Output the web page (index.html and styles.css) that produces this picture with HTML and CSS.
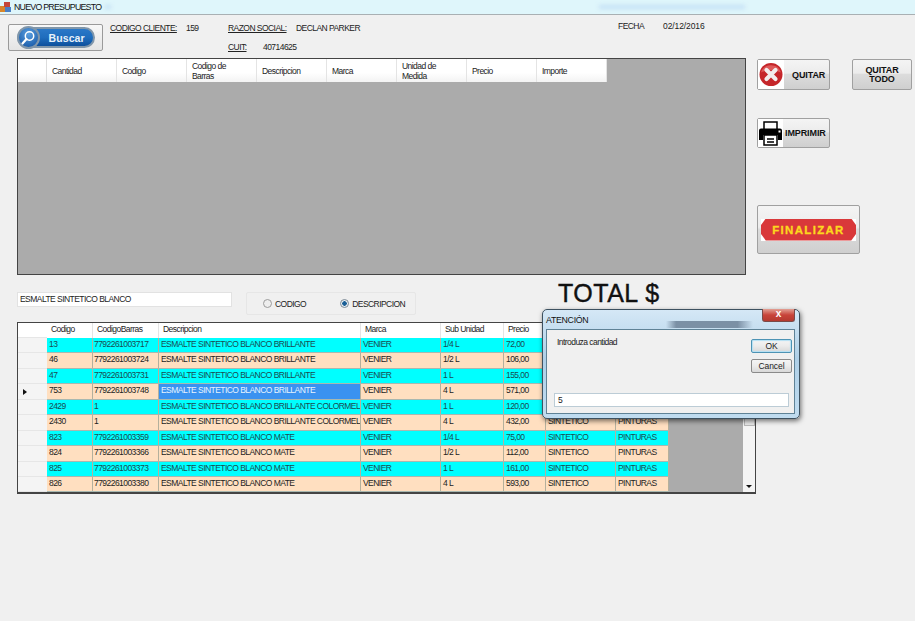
FILE: index.html
```html
<!DOCTYPE html>
<html>
  <head>
    <meta charset="utf-8">
    <link rel="stylesheet" href="styles.css">
    <title>Nuevo Presupuesto</title>
  </head>
  <body>
    <div class="titlebar">
      <svg class="app-icon" width="12" height="12" viewBox="0 0 12 12">
        <rect x="0" y="5" width="5" height="6" fill="#d9862b"/>
        <rect x="4" y="1" width="6" height="5" fill="#c4473a"/>
        <rect x="5" y="6" width="6" height="5" fill="#4a7fc4"/>
      </svg>
      <span>NUEVO PRESUPUESTO</span>
      <i class="smudge smudge-left"></i>
      <i class="smudge smudge-right"></i>
    </div>

    <div class="header">
      <button class="btn-buscar">
        <span class="buscar-pill">
          <span class="buscar-lens">
            <svg width="18" height="18" viewBox="0 0 18 18">
              <circle cx="10.5" cy="7" r="4.2" fill="none" stroke="#fff" stroke-width="1.5"/>
              <path d="M7.5 10 L3.5 14.5" stroke="#fff" stroke-width="2.2" stroke-linecap="round"/>
            </svg>
          </span>
          <span class="buscar-text">Buscar</span>
        </span>
      </button>
      <div class="client">
        <span class="label codigo-label">CODIGO CLIENTE:</span>
        <span class="codigo-value">159</span>
      </div>
      <div class="client-two">
        <div class="client-row">
          <span class="label razon-label">RAZON SOCIAL:</span>
          <span>DECLAN PARKER</span>
        </div>
        <div class="client-row cuit-row">
          <span class="label cuit-label">CUIT:</span>
          <span>40714625</span>
        </div>
      </div>
      <div class="fecha">
        <span class="fecha-label">FECHA</span>
        <span class="fecha-value">02/12/2016</span>
      </div>
    </div>

    <div class="upper">
      <div class="grid-top">
        <div class="top-head">
          <div class="top-corner"></div>
          <div class="top-col">Cantidad</div>
          <div class="top-col">Codigo</div>
          <div class="top-col">Codigo de<br>Barras</div>
          <div class="top-col">Descripcion</div>
          <div class="top-col">Marca</div>
          <div class="top-col">Unidad de<br>Medida</div>
          <div class="top-col">Precio</div>
          <div class="top-col">Importe</div>
        </div>
      </div>
      <div class="actions">
        <div class="actions-row">
          <button class="btn btn-quitar">
            <svg class="btn-icon" width="26" height="29" viewBox="0 0 26 29">
              <circle cx="13" cy="14.500" r="11.500" fill="#c5262a"/>
              <path d="M3 12.500 A10.500 10.500 0 0 1 23 12.500 Q13 7.500 3 12.500Z" fill="#de5a5a"/>
              <path d="M8.500 10 L17.500 19 M17.500 10 L8.500 19" stroke="#f2ecec" stroke-width="4.200" stroke-linecap="round"/>
            </svg>
            <span class="quitar-text">QUITAR</span>
          </button>
          <button class="btn btn-todo">QUITAR<br>TODO</button>
        </div>
        <button class="btn btn-imprimir">
          <svg class="btn-icon" width="25" height="28" viewBox="0 0 25 28">
            <rect x="6" y="3" width="13" height="8" fill="#fff" stroke="#000" stroke-width="1.500"/>
            <path d="M3 9.500 H22 Q24 9.500 24 11.500 V21 H20 V16 H5 V21 H1 V11.500 Q1 9.500 3 9.500Z" fill="#000"/>
            <rect x="20.500" y="11.500" width="2" height="2" fill="#fff"/>
            <rect x="6" y="16" width="13" height="10" fill="#fff" stroke="#000" stroke-width="1.500"/>
            <path d="M9 20 H16 M9 23 H16" stroke="#000" stroke-width="1.300"/>
          </svg>
          <span>IMPRIMIR</span>
        </button>
        <button class="btn btn-finalizar">
          <span class="finalizar-back">
            <span class="finalizar-plate">FINALIZAR</span>
          </span>
        </button>
      </div>
    </div>

    <div class="search">
      <div class="search-input">ESMALTE SINTETICO BLANCO</div>
      <div class="radios">
        <span class="radio"><i class="dot"></i>CODIGO</span>
        <span class="radio"><i class="dot dot-on"></i>DESCRIPCION</span>
      </div>
      <div class="total">TOTAL $</div>
    </div>

    <div class="grid-bottom">
      <div class="row-heads">
        <div class="rh rh-first"></div>
        <div class="rh"></div>
        <div class="rh"></div>
        <div class="rh"></div>
        <div class="rh"><b class="arrow"></b></div>
        <div class="rh"></div>
        <div class="rh"></div>
        <div class="rh"></div>
        <div class="rh"></div>
        <div class="rh"></div>
        <div class="rh"></div>
      </div>
      <div class="table">
        <div class="row row-head">
          <div class="c c1">Codigo</div><div class="c c2">CodigoBarras</div><div class="c c3">Descripcion</div><div class="c c4">Marca</div><div class="c c5">Sub Unidad</div><div class="c c6">Precio</div><div class="c c7">Tipo</div><div class="c c8">Rubro</div>
        </div>
        <div class="row cyan">
          <div class="c c1">13</div><div class="c c2">7792261003717</div><div class="c c3">ESMALTE SINTETICO BLANCO BRILLANTE</div><div class="c c4">VENIER</div><div class="c c5">1/4 L</div><div class="c c6">72,00</div><div class="c c7">SINTETICO</div><div class="c c8">PINTURAS</div>
        </div>
        <div class="row peach">
          <div class="c c1">46</div><div class="c c2">7792261003724</div><div class="c c3">ESMALTE SINTETICO BLANCO BRILLANTE</div><div class="c c4">VENIER</div><div class="c c5">1/2 L</div><div class="c c6">106,00</div><div class="c c7">SINTETICO</div><div class="c c8">PINTURAS</div>
        </div>
        <div class="row cyan">
          <div class="c c1">47</div><div class="c c2">7792261003731</div><div class="c c3">ESMALTE SINTETICO BLANCO BRILLANTE</div><div class="c c4">VENIER</div><div class="c c5">1 L</div><div class="c c6">155,00</div><div class="c c7">SINTETICO</div><div class="c c8">PINTURAS</div>
        </div>
        <div class="row peach">
          <div class="c c1">753</div><div class="c c2">7792261003748</div><div class="c c3 selected">ESMALTE SINTETICO BLANCO BRILLANTE</div><div class="c c4">VENIER</div><div class="c c5">4 L</div><div class="c c6">571,00</div><div class="c c7">SINTETICO</div><div class="c c8">PINTURAS</div>
        </div>
        <div class="row cyan">
          <div class="c c1">2429</div><div class="c c2">1</div><div class="c c3">ESMALTE SINTETICO BLANCO BRILLANTE COLORMEL</div><div class="c c4">VENIER</div><div class="c c5">1 L</div><div class="c c6">120,00</div><div class="c c7">SINTETICO</div><div class="c c8">PINTURAS</div>
        </div>
        <div class="row peach">
          <div class="c c1">2430</div><div class="c c2">1</div><div class="c c3">ESMALTE SINTETICO BLANCO BRILLANTE COLORMEL</div><div class="c c4">VENIER</div><div class="c c5">4 L</div><div class="c c6">432,00</div><div class="c c7">SINTETICO</div><div class="c c8">PINTURAS</div>
        </div>
        <div class="row cyan">
          <div class="c c1">823</div><div class="c c2">7792261003359</div><div class="c c3">ESMALTE SINTETICO BLANCO MATE</div><div class="c c4">VENIER</div><div class="c c5">1/4 L</div><div class="c c6">75,00</div><div class="c c7">SINTETICO</div><div class="c c8">PINTURAS</div>
        </div>
        <div class="row peach">
          <div class="c c1">824</div><div class="c c2">7792261003366</div><div class="c c3">ESMALTE SINTETICO BLANCO MATE</div><div class="c c4">VENIER</div><div class="c c5">1/2 L</div><div class="c c6">112,00</div><div class="c c7">SINTETICO</div><div class="c c8">PINTURAS</div>
        </div>
        <div class="row cyan">
          <div class="c c1">825</div><div class="c c2">7792261003373</div><div class="c c3">ESMALTE SINTETICO BLANCO MATE</div><div class="c c4">VENIER</div><div class="c c5">1 L</div><div class="c c6">161,00</div><div class="c c7">SINTETICO</div><div class="c c8">PINTURAS</div>
        </div>
        <div class="row peach">
          <div class="c c1">826</div><div class="c c2">7792261003380</div><div class="c c3">ESMALTE SINTETICO BLANCO MATE</div><div class="c c4">VENIER</div><div class="c c5">4 L</div><div class="c c6">593,00</div><div class="c c7">SINTETICO</div><div class="c c8">PINTURAS</div>
        </div>
      </div>
      <div class="scrollbar">
        <span class="thumb"></span>
        <span class="arrow-down"></span>
      </div>
    </div>

    <div class="dialog">
      <div class="dialog-title">
        <span>ATENCIÓN</span>
        <span class="dialog-close">x</span>
      </div>
      <div class="dialog-body">
        <div class="dialog-top">
          <span class="dialog-msg">Introduza cantidad</span>
          <div class="dialog-btns">
            <button class="dlg-btn dlg-ok">OK</button>
            <button class="dlg-btn">Cancel</button>
          </div>
        </div>
        <div class="dialog-input">5</div>
      </div>
    </div>
  </body>
</html>
```

FILE: styles.css
```css
html, body {
  margin: 0;
  height: 621px;
  overflow: hidden;
}

body {
  background-color: #f0f0f0;
  font-family: "Liberation Sans", Arial, sans-serif;
  font-size: 8.5px;
  letter-spacing: -0.55px;
  color: #222;
}

button {
  font-family: "Liberation Sans", Arial, sans-serif;
  padding: 0;
  margin: 0;
}

.titlebar {
  height: 14px;
  background-color: #dff6fb;
  border-bottom: 1px solid #a9b0b3;
  display: flex;
  align-items: center;
  font-size: 8.8px;
  letter-spacing: -0.75px;
  color: #111;
}

.app-icon {
  margin-right: 2px;
}

.smudge {
  height: 4px;
  filter: blur(2px);
  background-color: #c4e0f5;
}

.smudge-left {
  width: 6px;
  margin-left: 4px;
}

.smudge-right {
  width: 146px;
  margin-left: 488px;
}

.header {
  height: 43px;
  display: flex;
}

.btn-buscar {
  width: 95px;
  height: 27px;
  margin: 9px 0 0 8px;
  border: 1px solid #9a9a9a;
  border-radius: 2px;
  background: linear-gradient(#f8f8f8, #e4e4e4);
  display: flex;
  justify-content: center;
  align-items: center;
}

.buscar-pill {
  width: 78px;
  height: 21px;
  border: 2px solid #8096aa;
  border-radius: 11px;
  box-sizing: border-box;
  background: linear-gradient(#2a78c8 0%, #1f6dbd 50%, #0d4f9c 100%);
  display: flex;
  align-items: center;
}

.buscar-lens {
  width: 23px;
  height: 23px;
  margin-left: -2px;
  flex-shrink: 0;
  border-radius: 50%;
  background: radial-gradient(circle at 50% 30%, #5a9fe0, #0e4f9f);
  border: 2px solid #8096aa;
  box-sizing: border-box;
  display: flex;
  align-items: center;
  justify-content: center;
}

.buscar-text {
  margin-left: 9px;
  color: #e8f2fa;
  font-size: 10.500px;
  letter-spacing: 0.1px;
  font-weight: bold;
}

.label {
  text-decoration: underline;
}

.client {
  display: flex;
  margin: 8px 0 0 7px;
  width: 118px;
}

.codigo-label {
  width: 76px;
}

.client-two {
  width: 390px;
  margin-top: 8px;
}

.client-row {
  display: flex;
}

.cuit-row {
  margin-top: 9px;
}

.razon-label {
  width: 68px;
}

.cuit-label {
  width: 35px;
}

.fecha {
  display: flex;
  margin-top: 6px;
}

.fecha-label {
  width: 45px;
}

.fecha-value {
  letter-spacing: -0.1px;
}

.upper {
  height: 217px;
  display: flex;
  padding-left: 17px;
}

.grid-top {
  width: 727px;
  height: 215px;
  background-color: #ababab;
  border: 1px solid #444;
}

.top-head {
  width: 589px;
  height: 23px;
  display: flex;
  background: linear-gradient(#fff, #fff 60%, #f3f3f3);
}

.top-corner {
  width: 29px;
  border-right: 1px solid #ddd;
  box-sizing: border-box;
}

.top-col {
  width: 70px;
  box-sizing: border-box;
  padding-left: 5px;
  border-right: 1px solid #e4e4e4;
  display: flex;
  align-items: center;
  line-height: 10px;
}

.actions {
  margin-left: 11px;
  width: 155px;
  display: flex;
  flex-direction: column;
  align-items: flex-start;
  padding-top: 1px;
}

.actions-row {
  display: flex;
  gap: 22px;
}

.btn {
  border: 1px solid #a0a0a0;
  border-radius: 2px;
  background: linear-gradient(#f4f4f4, #ececec 45%, #dcdcdc 50%, #cfcfcf);
  font-weight: bold;
  font-size: 9px;
  letter-spacing: -0.1px;
  color: #111;
  box-sizing: border-box;
}

.btn-icon {
  background-color: #fff;
  flex-shrink: 0;
}

.btn-quitar {
  width: 73px;
  height: 31px;
  display: flex;
  align-items: center;
}

.quitar-text {
  margin-left: 8px;
}

.btn-todo {
  width: 60px;
  height: 31px;
  line-height: 9px;
}

.btn-imprimir {
  width: 73px;
  height: 30px;
  margin-top: 28px;
  display: flex;
  align-items: center;
  gap: 2px;
}

.btn-finalizar {
  width: 103px;
  height: 49px;
  margin-top: 57px;
  display: flex;
  align-items: center;
  justify-content: center;
}

.finalizar-back {
  width: 95px;
  height: 22px;
  background-color: #fff;
}

.finalizar-plate {
  width: 95px;
  height: 22px;
  background-color: #d9383a;
  clip-path: polygon(5% 0, 95% 0, 100% 30%, 100% 70%, 95% 100%, 5% 100%, 0 70%, 0 30%);
  color: #fcd81e;
  font-size: 11.500px;
  font-weight: bold;
  letter-spacing: 1.300px;
  -webkit-text-stroke: 0.3px #fcd81e;
  display: flex;
  align-items: center;
  justify-content: center;
}

.search {
  height: 47px;
  display: flex;
  padding-left: 17px;
  align-items: flex-start;
}

.search-input {
  width: 211px;
  height: 13px;
  margin-top: 17px;
  padding-left: 2px;
  background-color: #fff;
  border: 1px solid #e2e2e2;
  line-height: 13px;
}

.radios {
  width: 170px;
  height: 23px;
  margin: 17px 0 0 14px;
  border: 1px solid #e6e6e6;
  border-radius: 2px;
  box-sizing: border-box;
  display: flex;
  align-items: center;
  padding-left: 16px;
  gap: 34px;
}

.radio {
  display: flex;
  align-items: center;
  gap: 3px;
}

.dot {
  width: 9px;
  height: 9px;
  box-sizing: border-box;
  border-radius: 50%;
  border: 1px solid #9c9c9c;
  background-color: #eee;
  display: inline-block;
}

.dot-on {
  border-color: #7c8a96;
  background: radial-gradient(circle, #1a5f96 0 2px, #e8eef2 2.500px);
}

.total {
  margin: 5px 0 0 142px;
  font-size: 25px;
  line-height: 27px;
  font-weight: 500;
  letter-spacing: 0.5px;
  color: #111;
  -webkit-text-stroke: 0.4px #111;
}

.grid-bottom {
  width: 737px;
  height: 169px;
  margin-left: 17px;
  border: 1px solid #444;
  border-bottom-width: 2px;
  background-color: #ababab;
  display: flex;
  overflow: hidden;
}

.row-heads {
  width: 29px;
  flex-shrink: 0;
  background-color: #f4f4f4;
}

.rh {
  height: 15.440px;
  border-bottom: 1px solid #e6e6e6;
  box-sizing: border-box;
  display: flex;
  align-items: center;
  padding-left: 5px;
}

.rh-first {
  height: 15px;
  background-color: #fff;
}

.arrow {
  width: 0;
  height: 0;
  border-left: 4px solid #111;
  border-top: 3px solid transparent;
  border-bottom: 3px solid transparent;
}

.table {
  width: 696px;
  flex-shrink: 0;
  background-color: #ababab;
}

.row {
  display: flex;
  width: 622px;
  height: 15.440px;
  box-sizing: border-box;
  border-bottom: 1px solid #a8b8b0;
}

.row-head {
  height: 15px;
  width: 696px;
  background-color: #fff;
  border-bottom: 0;
}

.cyan {
  background-color: #00ffff;
  color: #1b4b50;
}

.peach {
  background-color: #ffdfc0;
}

.c {
  box-sizing: border-box;
  padding-left: 2px;
  border-right: 1px solid #b4b09c;
  white-space: nowrap;
  overflow: hidden;
  line-height: 13px;
}

.row-head .c {
  padding-left: 4px;
  border-right-color: #e4e4e4;
}

.c1 {
  width: 46px;
}

.c2 {
  width: 66px;
  padding-left: 1px;
}

.c3 {
  width: 202px;
}

.c4 {
  width: 80px;
}

.c5 {
  width: 63px;
}

.c6 {
  width: 42px;
}

.c7 {
  width: 70px;
}

.c8 {
  width: 53px;
}

.selected {
  background-color: #3a92f0;
  color: #e8f4ff;
}

.scrollbar {
  width: 12px;
  flex-shrink: 0;
  background-color: #f4f4f4;
  position: relative;
}

.thumb {
  position: absolute;
  left: 1px;
  top: 75px;
  width: 9px;
  height: 26px;
  background-color: #e8e8e8;
  border: 1px solid #b8b8b8;
}

.arrow-down {
  position: absolute;
  left: 3px;
  bottom: 4px;
  width: 0;
  height: 0;
  border-top: 3px solid #111;
  border-left: 3px solid transparent;
  border-right: 3px solid transparent;
}

.dialog {
  position: absolute;
  left: 542px;
  top: 309px;
  width: 258px;
  height: 110px;
  box-sizing: border-box;
  border: 1px solid #3d5160;
  border-radius: 5px;
  background:
    linear-gradient(90deg, transparent 48%, #7b90a5 52%, #7b90a5 76%, transparent 82%) 0 11px / 100% 7px no-repeat,
    linear-gradient(#d5e8f6, #aecfe7 45%, #c0dcf0);
  box-shadow: 1px 2px 5px rgba(0, 0, 0, 0.55);
  display: flex;
  flex-direction: column;
  padding: 0 4px 4px 3px;
}

.dialog-title {
  height: 19px;
  flex-shrink: 0;
  display: flex;
  justify-content: space-between;
  align-items: center;
  font-size: 8.800px;
  letter-spacing: -0.3px;
  color: #111;
}

.dialog-close {
  align-self: flex-start;
  width: 33px;
  height: 13px;
  background: linear-gradient(#e2a094, #c8443a 50%, #b43a30);
  border: 1px solid #7a4a48;
  border-top: 0;
  border-radius: 0 0 3px 3px;
  box-sizing: border-box;
  margin-top: -1px;
  color: #fff;
  font-size: 10px;
  font-weight: bold;
  line-height: 10px;
  text-align: center;
}

.dialog-body {
  flex: 1;
  background-color: #f0f0f0;
  border: 1px solid #5f8296;
  padding: 0 2px 6px 7px;
  display: flex;
  flex-direction: column;
  justify-content: space-between;
}

.dialog-msg {
  margin: 5px 0 0 3px;
}

.dialog-top {
  display: flex;
  justify-content: space-between;
  padding-top: 2px;
}

.dialog-btns {
  display: flex;
  flex-direction: column;
  gap: 6px;
  margin-top: 7px;
}

.dlg-btn {
  width: 41px;
  height: 14px;
  font-size: 8.500px;
  letter-spacing: -0.1px;
  color: #222;
  background: linear-gradient(#f4f4f4, #ebebeb 50%, #d8d8d8);
  border: 1px solid #8a8a8a;
  border-radius: 2px;
}

.dlg-ok {
  border-color: #4d93b4;
  box-shadow: inset 0 0 1px 1px #b4e0f4;
}

.dialog-input {
  width: 235px;
  height: 14px;
  box-sizing: border-box;
  background-color: #fff;
  border: 1px solid #bcccd6;
  padding-left: 3px;
  line-height: 12px;
}
```
